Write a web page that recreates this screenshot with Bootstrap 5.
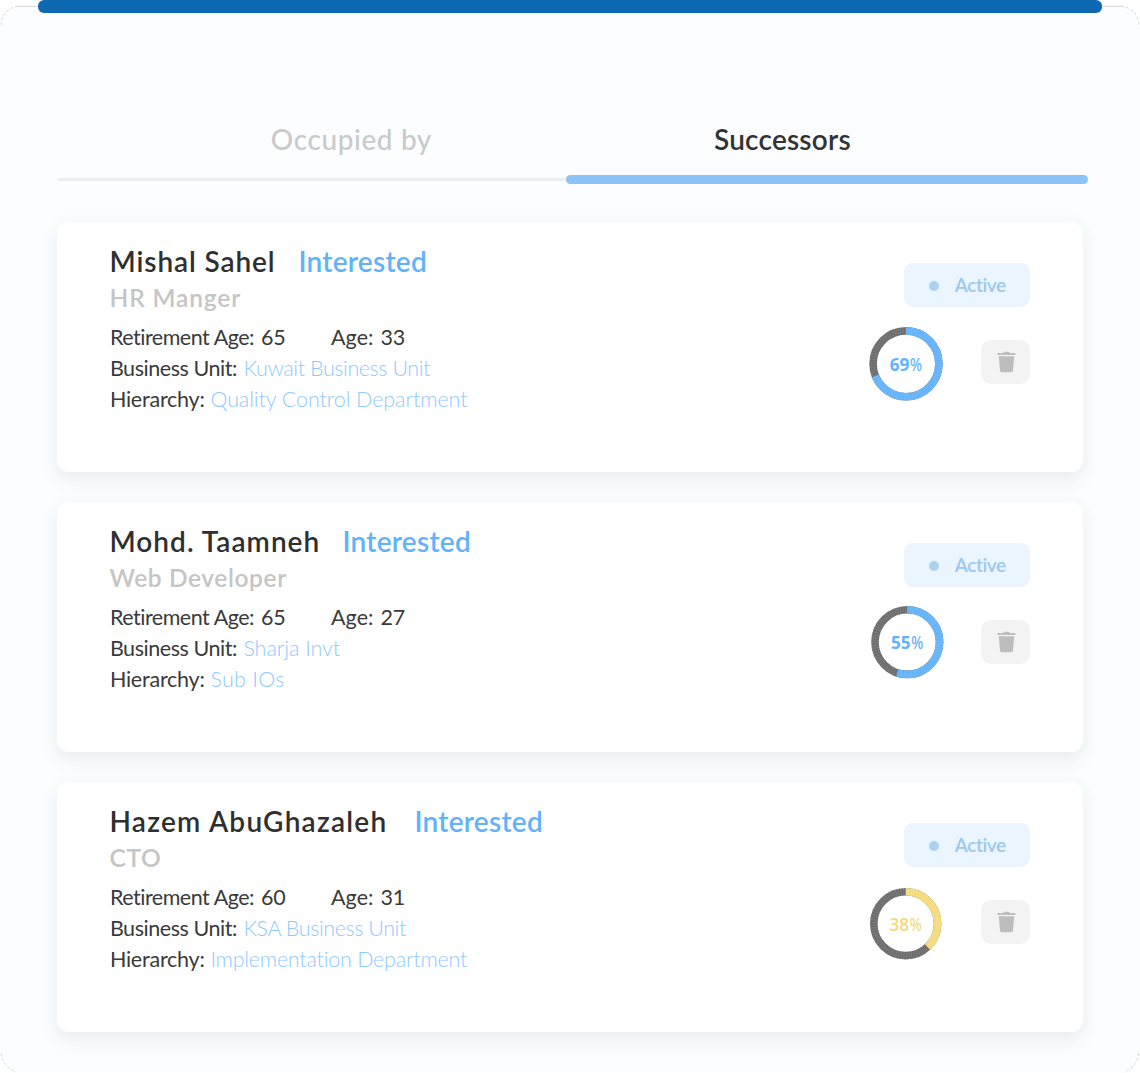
<!DOCTYPE html>
<html lang="en">
<head>
<meta charset="utf-8">
<meta name="viewport" content="width=device-width, initial-scale=1">
<title>Successors</title>
<link href="https://cdn.jsdelivr.net/npm/bootstrap@5.3.0/dist/css/bootstrap.min.css" rel="stylesheet">
<script src="https://cdn.jsdelivr.net/npm/bootstrap@5.3.0/dist/js/bootstrap.bundle.min.js"></script>
<style>
body{font-family:Lato,"Open Sans",sans-serif;background:#fff;color:#333;height:1073px;overflow:hidden}
.panel{height:1066px;margin-top:6px;background:#fcfdfe;border-radius:20px;padding:115.5px 57px 0}
.panel-edge{top:0;left:0}
.topbar{top:0;left:38px;width:1063.5px;height:12.6px;background:#0e69b0;border-radius:6px}
.tab-head{font-size:28px;line-height:34px;font-weight:500;white-space:nowrap}
.tab-off{color:#c9cacb;letter-spacing:.6px;margin-left:213.8px;width:443.2px}
.tab-on{letter-spacing:.2px;font-weight:600}
.track{margin:19px -5.2px 37.5px 1.2px;height:10px}
.track-line{height:3.4px;background:#eeeff2}
.track-fill{height:9.6px;width:522.5px;background:#8ac4fa;border-radius:5px}
.person{height:250px;margin-bottom:30px;border:0;border-radius:12px;background:#fff;box-shadow:0 9px 18px rgba(60,62,70,.075),0 0 18px rgba(80,110,190,.03);padding:20.7px 52.7px 0 52.5px}
.nm{font-size:28px;line-height:37px;font-weight:600;color:#2f2f2f;padding-top:.4px}
.flag{color:#62b2fb;letter-spacing:.25px}
.role{font-size:24.5px;line-height:35px;font-weight:600;color:#c5c5c5;margin-bottom:6.5px}
.det{font-size:21.5px;line-height:31.4px;color:#3a3a3a;padding-left:.4px}
.det b{font-weight:300;color:#8fc9ff}
.k-unit{width:133.5px;letter-spacing:-.45px}
.k-hier{width:100.5px;letter-spacing:-.22px}
.k-ret{width:151px;letter-spacing:-.48px}
.k-age{width:49.5px;letter-spacing:.1px}
.v-ret{width:70px}
.side{width:162px;padding-top:20px}
.status{width:126px;height:44px;border-radius:9px;background:#eaf5ff;color:#9dc8ee;font-size:19px;font-weight:600;letter-spacing:-.4px;padding:1px 0 0 24.5px}
.status i{width:10px;height:10px;border-radius:50%;background:#acd1f2;margin:2px 16px 0 0}
.tools{padding-top:18.3px}
.trash{width:49px;height:43.7px;border:0;border-radius:10px;background:#f3f3f3;margin-top:15.3px;padding:0 0 0 1px}
.ring text{font-family:"Noto Sans","Open Sans",sans-serif;font-size:17.2px}
.ring circle{fill:none;stroke-width:7.6}
</style>
</head>
<body>
<main class="panel">
  <div class="d-flex tab-head"><div class="tab-off">Occupied by</div><div class="tab-on">Successors</div></div>
  <div class="track d-flex align-items-center"><div class="track-line flex-grow-1"></div><div class="track-fill"></div></div>
  <div id="people"></div>
</main>
<svg class="panel-edge position-absolute pe-none" width="1140" height="1073" fill="none" stroke="#d3d7d6">
  <path d="M38 6.3H18M1102 6.3H1121"/>
  <path d="M18 6.3C9 7 1.500 14 1 25M1121 6.300C1131 7 1138.500 14 1139 25M1 1053Q3 1067 16 1072M1139 1053Q1137 1067 1124 1072" stroke-dasharray="3 2" stroke="#d6d9d9"/>
</svg>
<div class="topbar position-absolute"></div>
<script>
const people = [
  {name:"Mishal Sahel", ns:.9, flagX:190.3, role:"HR Manger", rs:.87, ret:65, age:33, unit:"Kuwait Business Unit", us:-.43, hier:"Quality Control Department", hs:-.08, pct:69, weight:700, cx:38, cy:38.8, r:32.9, color:"#62b3fb"},
  {name:"Mohd. Taamneh", ns:1.04, flagX:234.3, role:"Web Developer", rs:.6, ret:65, age:27, unit:"Sharja Invt", us:-.05, hier:"Sub IOs", hs:.3, pct:55, weight:700, cx:39.3, cy:37.1, r:32.3, color:"#62b3fb"},
  {name:"Hazem AbuGhazaleh", ns:1.26, flagX:306.3, role:"CTO", rs:.65, ret:60, age:31, unit:"KSA Business Unit", us:-.42, hier:"Implementation Department", hs:-.23, pct:38, weight:600, cx:37.7, cy:38.7, r:31.9, color:"#f5db7c"}
];
document.getElementById("people").innerHTML = people.map(p => `
<section class="card person flex-row justify-content-between">
  <div class="text-nowrap">
    <div class="nm d-flex"><div style="width:${p.flagX - 1.4}px;letter-spacing:${p.ns}px">${p.name}</div><div class="flag">Interested</div></div>
    <div class="role" style="letter-spacing:${p.rs}px">${p.role}</div>
    <div class="det d-flex"><div class="k-ret">Retirement Age:</div><div class="v-ret">${p.ret}</div><div class="k-age">Age:</div><div>${p.age}</div></div>
    <div class="det d-flex"><div class="k-unit">Business Unit:</div><b style="letter-spacing:${p.us}px">${p.unit}</b></div>
    <div class="det d-flex"><div class="k-hier">Hierarchy:</div><b style="letter-spacing:${p.hs}px">${p.hier}</b></div>
  </div>
  <div class="side">
    <div class="status d-flex align-items-center ms-auto"><i></i>Active</div>
    <div class="tools d-flex justify-content-between align-items-start">
      <svg class="ring" width="76" height="78" viewBox="0 0 76 78">
        <g transform="rotate(-90 ${p.cx} ${p.cy})">
          <circle cx="${p.cx}" cy="${p.cy}" r="${p.r}" stroke="#6c6c6c"/>
          <circle cx="${p.cx}" cy="${p.cy}" r="${p.r}" stroke="${p.color}" pathLength="100" stroke-dasharray="${p.pct} 100"/>
          <circle cx="${p.cx}" cy="${p.cy}" r="${p.r}" stroke="#fff" stroke-opacity=".12" stroke-dasharray="1 1.6"/>
        </g>
        <text x="${p.cx - 16.3}" y="${p.cy + 6.9}" fill="${p.color}" font-weight="${p.weight}">${p.pct}</text>
        <text x="${p.cx + 4}" y="${p.cy + 6.9}" fill="${p.color}" font-weight="500" textLength="12" lengthAdjust="spacingAndGlyphs">%</text>
      </svg>
      <button class="btn trash d-flex justify-content-center align-items-center" aria-label="Remove">
        <svg width="19" height="22" viewBox="0 0 19 22" fill="#bdbdbd"><path d="M.5 2.700Q.5 2 1.200 2H5.800L7 1Q7.300.7 8 .7H11Q11.700.7 12 1L13.200 2H17.800Q18.500 2 18.500 2.700V4H.5Z"/><path d="M1.800 5.300H17.200L16 19.500Q15.800 21.300 14 21.300H5Q3.200 21.300 3 19.500Z"/></svg>
      </button>
    </div>
  </div>
</section>`).join("");
</script>
</body>
</html>
